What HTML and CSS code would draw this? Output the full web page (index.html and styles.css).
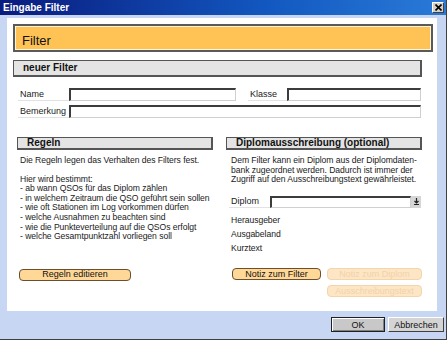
FILE: index.html
```html
<!DOCTYPE html>
<html lang="de">
<head>
  <meta charset="UTF-8" />
  <title>Eingabe Filter</title>
  <link rel="stylesheet" href="styles.css">
</head>
<body>
  <div class="window">
    <div class="titlebar">
      <span>Eingabe Filter</span>
      <span class="close">
        <svg width="7" height="7" viewBox="0 0 7 7"><path d="M0.5 0.5 L6.5 6.5 M6.5 0.5 L0.5 6.5" stroke="#000" stroke-width="1.6"/></svg>
      </span>
    </div>

    <div class="frame">
      <div class="panel">
        <div class="banner">Filter</div>

        <div class="bar bar-wide">neuer Filter</div>

        <div class="fields">
          <div class="row">
            <label class="lbl">Name</label>
            <input type="text" class="inp inp-name">
            <label class="lbl lbl-klasse">Klasse</label>
            <input type="text" class="inp inp-klasse">
          </div>
          <div class="row">
            <label class="lbl">Bemerkung</label>
            <input type="text" class="inp inp-bem">
          </div>
        </div>

        <div class="columns">
          <section class="col col-left">
            <div class="bar">Regeln</div>
            <p class="txt intro">Die Regeln legen das Verhalten des Filters fest.</p>
            <p class="txt list">
              Hier wird bestimmt:<br>
              - ab wann QSOs für das Diplom zählen<br>
              - in welchem Zeitraum die QSO geführt sein sollen<br>
              - wie oft Stationen im Log vorkommen dürfen<br>
              - welche Ausnahmen zu beachten sind<br>
              - wie die Punkteverteilung auf die QSOs erfolgt<br>
              - welche Gesamtpunktzahl vorliegen soll
            </p>
            <div class="btns">
              <button class="btn btn-regeln">Regeln editieren</button>
            </div>
          </section>

          <section class="col col-right">
            <div class="bar">Diplomausschreibung (optional)</div>
            <p class="txt desc">Dem Filter kann ein Diplom aus der Diplomdaten-<br>bank zugeordnet werden. Dadurch ist immer der<br>Zugriff auf den Ausschreibungstext gewährleistet.</p>
            <div class="row diplom-row">
              <label class="lbl lbl-diplom">Diplom</label>
              <input type="text" class="inp inp-diplom">
              <span class="drop">
                <svg width="7" height="7" viewBox="0 0 7 7"><path d="M3.5 0 V4.5 M1.5 3 L3.5 5 L5.5 3 M1 6.5 H6" stroke="#222" stroke-width="1.2" fill="none"/></svg>
              </span>
            </div>
            <p class="txt info first">Herausgeber</p>
            <p class="txt info">Ausgabeland</p>
            <p class="txt info">Kurztext</p>
            <div class="btns btns-right">
              <button class="btn btn-notiz">Notiz zum Filter</button>
              <div class="stack">
                <button class="btn off" disabled>Notiz zum Diplom</button>
                <button class="btn off" disabled>Ausschreibungstext</button>
              </div>
            </div>
          </section>
        </div>
      </div>

      <div class="footer">
        <button class="sys ok">OK</button>
        <button class="sys">Abbrechen</button>
      </div>
    </div>
  </div>
</body>
</html>
```

FILE: styles.css
```css
* { box-sizing: border-box; margin: 0; padding: 0; }

body {
  font-family: 'Liberation Sans', Arial, sans-serif;
  background: #fff;
  color: #111;
}

.window {
  width: 447px;
  height: 340px;
  background: #c7d6f2;
  border-right: 1px solid #404040;
  border-bottom: 1px solid #404040;
  display: flex;
  flex-direction: column;
  overflow: hidden;
}

.titlebar {
  height: 15px;
  flex: none;
  background: linear-gradient(90deg, #0a1b7e, #1258c0 60%, #2a7ad8);
  color: #fff;
  font-weight: bold;
  font-size: 10px;
  display: flex;
  align-items: center;
  justify-content: space-between;
  padding: 0 2px 0 3px;
}

.close {
  width: 12px;
  height: 11px;
  background: #d4d0c8;
  border: 1px solid;
  border-color: #fff #404040 #404040 #fff;
  display: flex;
  align-items: center;
  justify-content: center;
}

.frame {
  flex: 1;
  display: flex;
  flex-direction: column;
  padding: 3px 9px 0 7px;
}

.panel {
  background: #fff;
  height: 293px;
  flex: none;
  padding: 6px 4px 0 6px;
  overflow: hidden;
}

.banner {
  height: 28px;
  background: #ffc254;
  border: 2px solid #5a5a5a;
  box-shadow: inset 0 0 0 1px #fff3d8;
  font-size: 13px;
  padding: 7px 0 0 7px;
}

.bar {
  background: #e4e4e4;
  border: 1px solid #555;
  border-right-width: 2px;
  border-bottom-width: 2px;
  font-weight: bold;
  font-size: 10px;
  height: 13px;
  line-height: 10px;
  padding-left: 9px;
  white-space: nowrap;
}

.bar-wide {
  width: 409px;
  height: 17px;
  line-height: 14px;
  margin-top: 8px;
}

.fields {
  margin-top: 11px;
  padding-left: 5px;
  display: flex;
  flex-direction: column;
  gap: 4px;
}

.row {
  display: flex;
  align-items: flex-end;
}

.lbl {
  font-size: 9px;
  color: #222;
  width: 51px;
  border-bottom: 1px solid #e2e2e2;
  padding-left: 2px;
  line-height: 12px;
}

.lbl-klasse {
  width: 39px;
  margin-left: 12px;
}

.inp {
  height: 13px;
  border: 1px solid #cfcfcf;
  border-top: 2px solid #3c3c3c;
  border-left: 2px solid #3c3c3c;
  background: #fff;
  outline: none;
}

.inp-name { width: 167px; }
.inp-klasse { width: 134px; }
.inp-bem { width: 352px; }

.columns {
  margin-top: 19px;
  display: grid;
  grid-template-columns: 196px 196px;
  column-gap: 13px;
  padding-left: 4px;
}

.txt {
  font-size: 8.6px;
  letter-spacing: -0.05px;
  color: #1a1a1a;
  line-height: 9.6px;
  padding-left: 3px;
  white-space: nowrap;
}

.intro {
  margin-top: 6px;
}

.list {
  margin-top: 9px;
}

.desc {
  margin-top: 6px;
  padding-left: 5px;
}

.diplom-row {
  margin-top: 10px;
  padding-left: 3px;
}

.lbl-diplom {
  width: 41px;
}

.inp-diplom {
  width: 141px;
  height: 12px;
}

.drop {
  width: 10px;
  height: 12px;
  background: #d6d6d6;
  display: flex;
  align-items: center;
  justify-content: center;
}

.info {
  padding-left: 5px;
  margin-top: 4.4px;
}

.info.first {
  margin-top: 8px;
}

.btns {
  margin-top: 27px;
  padding-left: 2px;
  display: flex;
  align-items: flex-start;
}

.btns-right {
  margin-top: 15px;
  padding-left: 6px;
  gap: 6px;
}

.stack {
  display: flex;
  flex-direction: column;
  gap: 5px;
}

.btn {
  font-family: 'Liberation Sans', Arial, sans-serif;
  font-size: 9px;
  height: 12px;
  line-height: 9px;
  border: 1px solid #6b5030;
  border-radius: 4px;
  background: #ffd898;
  color: #111;
  white-space: nowrap;
}

.btn-regeln { width: 112px; }
.btn-notiz { width: 94px; }

.btn.off {
  width: 95px;
  background: #fde6c6;
  border-color: #f4d4a8;
  color: #f2d2a8;
}

.footer {
  flex: 1;
  display: flex;
  justify-content: flex-end;
  align-items: flex-start;
  gap: 3px;
  padding-top: 6px;
  margin-right: -7px;
}

.sys {
  font-family: 'Liberation Sans', Arial, sans-serif;
  font-size: 9px;
  height: 15px;
  background: #d4d4d4;
  border: 1px solid;
  border-color: #fff #404040 #404040 #fff;
  color: #111;
  width: 56px;
}

.sys.ok {
  width: 54px;
  background: #c8c8c8;
  border: 1px solid #202020;
  box-shadow: inset 1px 1px 0 #fff, inset -1px -1px 0 #808080;
}
```
